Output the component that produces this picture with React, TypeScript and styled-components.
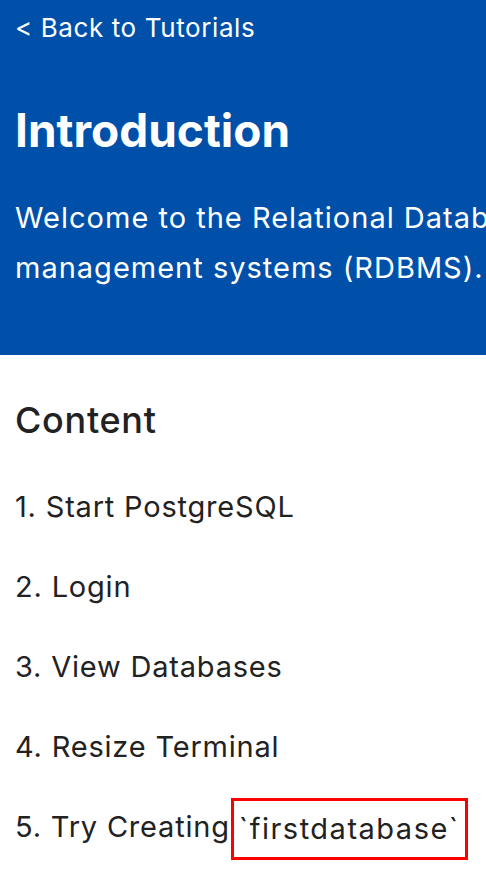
import React from 'react';
import styled, { createGlobalStyle } from 'styled-components';

const GlobalStyle = createGlobalStyle`
  html, body {
    margin: 0;
    padding: 0;
    background: #fff;
    overflow-x: hidden;
  }

  body {
    font-family: Inter, "Noto Sans", "Liberation Sans", sans-serif;
    -webkit-font-smoothing: antialiased;
  }
`;

const items = [
  { label: 'Start PostgreSQL' },
  { label: 'Login' },
  { label: 'View Databases' },
  { label: 'Resize Terminal' },
  { label: 'Try Creating', code: '`firstdatabase`' },
];

const App = () => {
  return (
    <>
      <GlobalStyle />
      <Page>
        <Hero>
          <BackLink href="#">&lt; Back to Tutorials</BackLink>
          <Title>Introduction</Title>
          <Lead>
            <LeadLine>Welcome to the Relational Database tutorial on relational database</LeadLine>
            <LeadLine>management systems (RDBMS).</LeadLine>
          </Lead>
        </Hero>

        <ContentSection>
          <SectionTitle>Content</SectionTitle>
          <StepList>
            {items.map((item, i) => (
              <Step key={item.label}>
                {i + 1}. {item.label}
                {item.code && <Highlight>{item.code}</Highlight>}
              </Step>
            ))}
          </StepList>
        </ContentSection>
      </Page>
    </>
  );
};

export default App;

const Page = styled.div`
  width: 486px;
  min-height: 870px;
  overflow: hidden;
`;

const Hero = styled.header`
  background-color: #0050aa;
  color: #fff;
  padding: 0 15px 62px;
`;

const BackLink = styled.a`
  display: block;
  color: #fff;
  text-decoration: none;
  font-size: 26px;
  line-height: 56px;
  font-weight: 400;
  letter-spacing: 0.6px;
`;

const Title = styled.h1`
  margin: 45px 0 0;
  font-size: 46px;
  line-height: 58px;
  font-weight: 700;
`;

const Lead = styled.p`
  margin: 34px 0 0;
  font-size: 29px;
  line-height: 50px;
  font-weight: 400;
  letter-spacing: 1px;
`;

const LeadLine = styled.span`
  display: block;
  white-space: nowrap;
`;

const ContentSection = styled.section`
  padding: 0 15px;
  color: #222;
`;

const SectionTitle = styled.h2`
  margin: 43px 0 0;
  font-size: 36px;
  line-height: 44px;
  font-weight: 500;
  letter-spacing: 0.7px;
`;

const StepList = styled.ol`
  list-style: none;
  margin: 45px 0 0;
  padding: 0;
  display: flex;
  flex-direction: column;
  gap: 40px;
`;

const Step = styled.li`
  font-size: 29px;
  line-height: 40px;
  letter-spacing: 0.8px;
  white-space: nowrap;
`;

const Highlight = styled.span`
  display: inline-block;
  margin-left: 1px;
  padding: 8px 5px 8px 5px;
  border: 3px solid #f00;
  letter-spacing: 1.5px;
  vertical-align: middle;
  margin-top: -10px;
  margin-bottom: -10px;
`;
